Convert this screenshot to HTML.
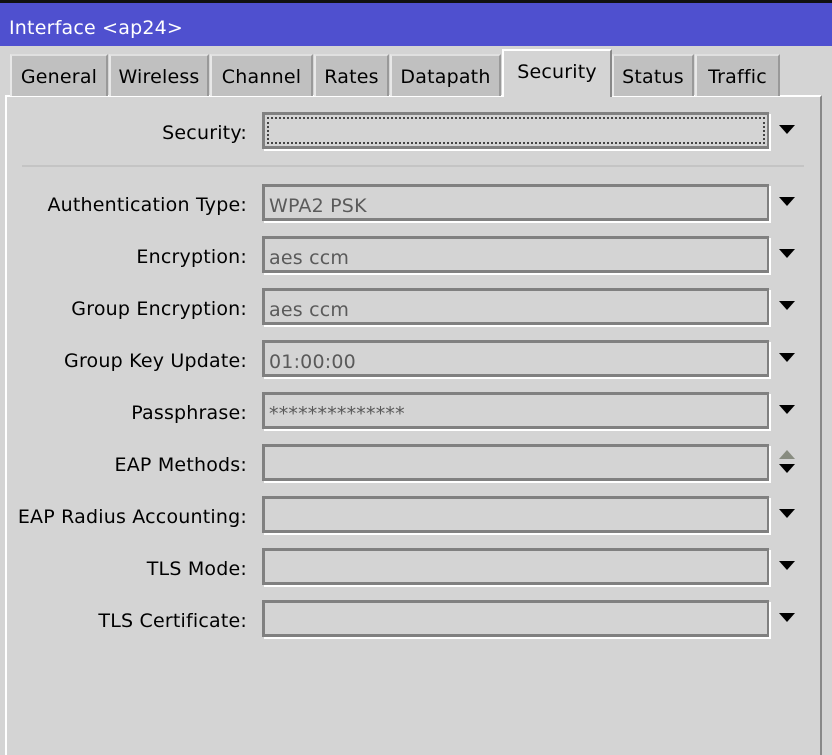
<!DOCTYPE html>
<html><head><style>
*{margin:0;padding:0;box-sizing:border-box}
body{width:832px;height:746px;background:#d4d4d4;position:relative;overflow:hidden;font-family:"DejaVu Sans","Liberation Sans",sans-serif;font-size:19px;letter-spacing:0.2px;color:#000}
.title{position:absolute;left:0;top:0;width:832px;height:46px;background:#4f50cf;border-top:3px solid #111;color:#fff;padding:14px 0 0 9px;font-size:19px}
.tab{position:absolute;top:54px;height:42px;background:#c0c0c0;border-left:2px solid #e8e8e8;border-right:2px solid #999;border-top:2px solid #e0e0e0;text-align:center;padding-top:10px;white-space:nowrap}
.tab.sel{top:49px;height:48px;background:#d4d4d4;border-left:2px solid #fff;border-top:2px solid #fff;border-right:2px solid #888;padding-top:10px;z-index:2}
.panel{position:absolute;left:5px;top:95px;width:817px;height:660px;border-left:2px solid #fff;border-top:2px solid #fff;border-right:2px solid #888}
.lbl{position:absolute;right:585px;text-align:right;white-space:nowrap}
.box{position:absolute;left:262px;width:507px;height:37px;border:3px solid #808080;border-right-width:2px;border-bottom-width:3px;box-shadow:2px 2px 0 #fff;color:#5a5a5a;padding:8px 0 0 4px}
.arr{position:absolute;left:779px;width:0;height:0;border-left:8px solid transparent;border-right:8px solid transparent;border-top:9px solid #000}
.up{position:absolute;left:779px;width:0;height:0;border-left:8px solid transparent;border-right:8px solid transparent;border-bottom:9px solid #888c80}
.sep{position:absolute;left:22px;top:165px;width:782px;height:2px;background:#c4c4c4}
</style></head><body>
<div class="title">Interface &lt;ap24&gt;</div>
<div class="panel"></div>
<div class="tab" style="left:10px;width:98px">General</div>
<div class="tab" style="left:109px;width:100px">Wireless</div>
<div class="tab" style="left:210px;width:103px">Channel</div>
<div class="tab" style="left:314px;width:75px">Rates</div>
<div class="tab" style="left:390px;width:111px">Datapath</div>
<div class="tab sel" style="left:502px;width:110px">Security</div>
<div class="tab" style="left:612px;width:82px">Status</div>
<div class="tab" style="left:695px;width:85px">Traffic</div>

<div class="lbl" style="top:122px">Security:</div>
<div class="box" style="top:112px"><div style="position:absolute;left:2px;top:2px;right:2px;bottom:2px;border:2px dotted #444"></div></div>
<div class="arr" style="top:125px"></div>
<div class="sep"></div>

<div class="lbl" style="top:194px">Authentication Type:</div><div class="box" style="top:184px">WPA2 PSK</div><div class="arr" style="top:197px"></div>
<div class="lbl" style="top:246px">Encryption:</div><div class="box" style="top:236px">aes ccm</div><div class="arr" style="top:249px"></div>
<div class="lbl" style="top:298px">Group Encryption:</div><div class="box" style="top:288px">aes ccm</div><div class="arr" style="top:301px"></div>
<div class="lbl" style="top:350px">Group Key Update:</div><div class="box" style="top:340px">01:00:00</div><div class="arr" style="top:353px"></div>
<div class="lbl" style="top:402px">Passphrase:</div><div class="box" style="top:392px">**************</div><div class="arr" style="top:405px"></div>
<div class="lbl" style="top:454px">EAP Methods:</div><div class="box" style="top:444px"></div><div class="up" style="top:450px"></div><div class="arr" style="top:464px"></div>
<div class="lbl" style="top:506px">EAP Radius Accounting:</div><div class="box" style="top:496px"></div><div class="arr" style="top:509px"></div>
<div class="lbl" style="top:558px">TLS Mode:</div><div class="box" style="top:548px"></div><div class="arr" style="top:561px"></div>
<div class="lbl" style="top:610px">TLS Certificate:</div><div class="box" style="top:600px"></div><div class="arr" style="top:613px"></div>
</body></html>
